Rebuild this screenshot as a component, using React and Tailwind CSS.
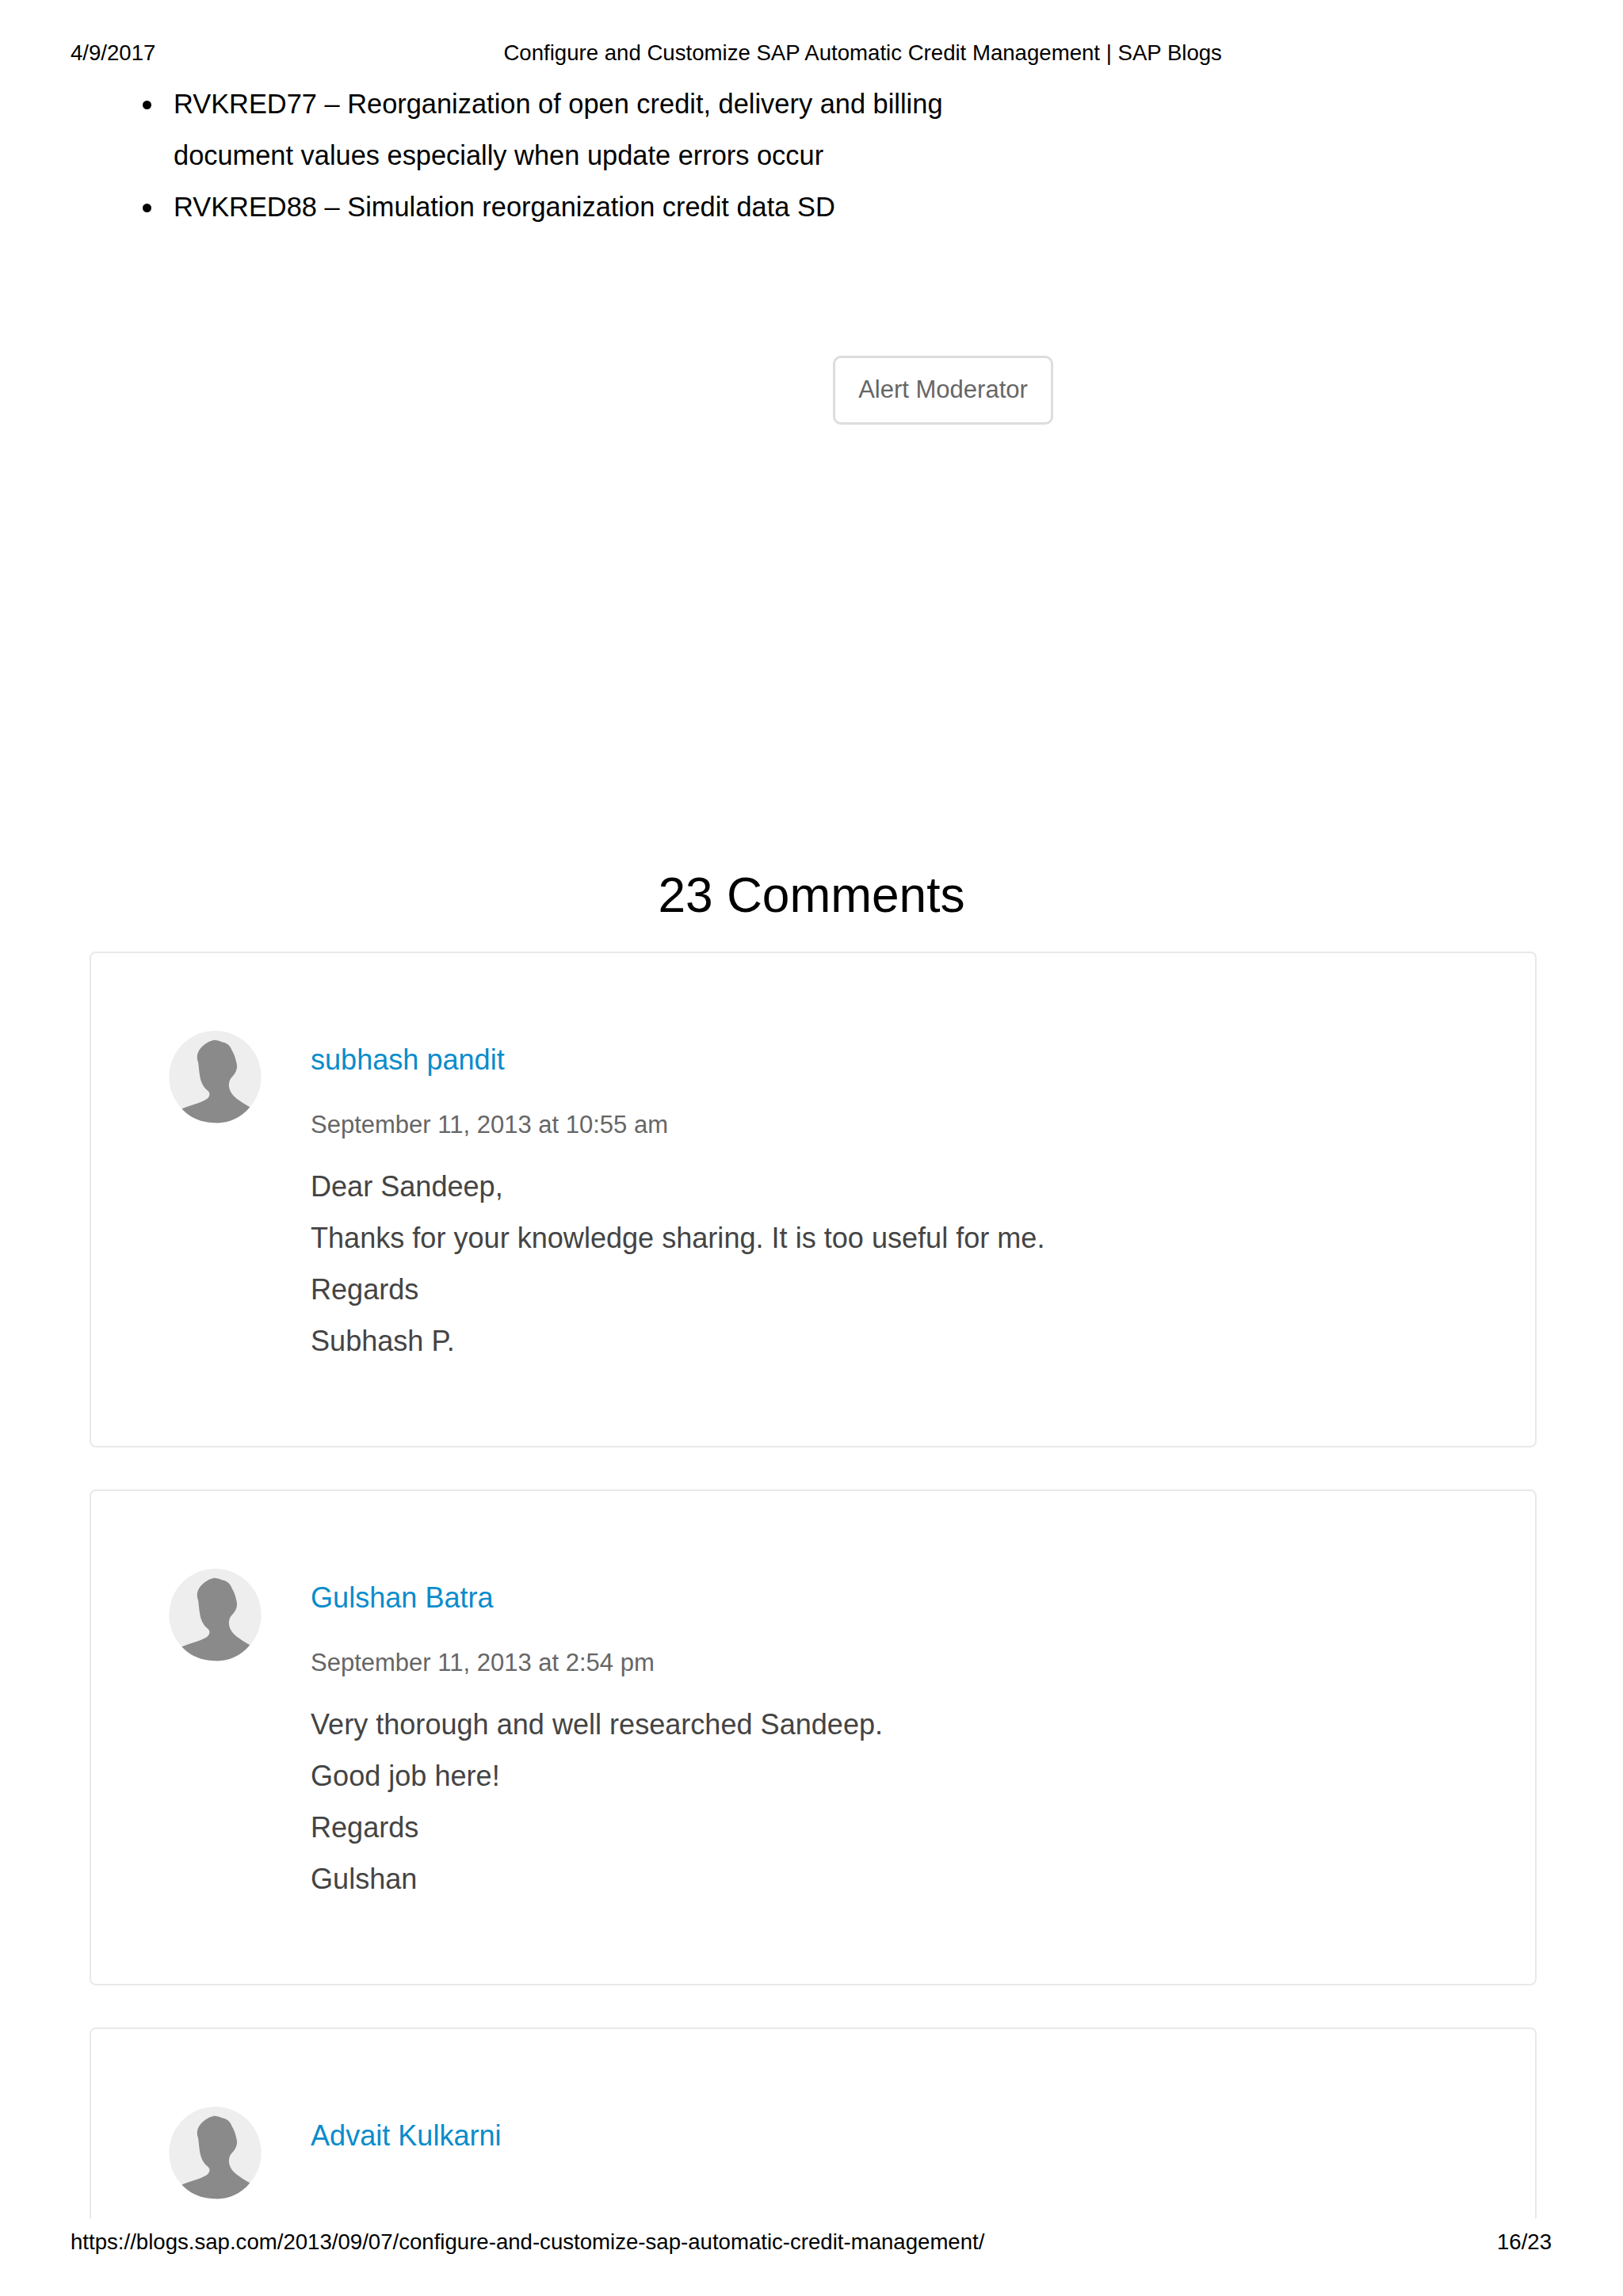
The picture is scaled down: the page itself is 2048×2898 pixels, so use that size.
import React from "react";

const comments = [
  {
    name: "subhash pandit",
    date: "September 11, 2013 at 10:55 am",
    lines: ["Dear Sandeep,", "Thanks for your knowledge sharing. It is too useful for me.", "Regards", "Subhash P."],
  },
  {
    name: "Gulshan Batra",
    date: "September 11, 2013 at 2:54 pm",
    lines: ["Very thorough and well researched Sandeep.", "Good job here!", "Regards", "Gulshan"],
  },
  { name: "Advait Kulkarni", date: "", lines: [] },
];

function Avatar() {
  return (
    <svg viewBox="40 30 348 350" className="w-[117px] h-[117px] shrink-0">
      <circle cx="214" cy="204" r="174" fill="#eeeeee" />
      <path
        d="M210 65 C225 64 235 72 250 75 C265 82 272 90 276 102 C285 118 290 130 293 145 C298 160 298 175 289 190 C283 200 272 208 269 218 C263 235 266 250 277 268 C290 285 320 305 345 318 C310 362 260 380 214 378 C165 378 120 360 88 325 C115 312 150 305 176 292 C192 283 198 270 188 258 C170 245 160 225 156 200 C153 180 152 165 150 150 C142 130 146 112 158 97 C172 80 192 68 210 65 Z"
        fill="#8a8a8a"
      />
    </svg>
  );
}

function CommentCard({ c }) {
  return (
    <div className="bg-white border-2 border-[#e9e9e9] rounded-lg min-h-[626px] pl-[98px] pt-[98px] flex gap-[62px]">
      <Avatar />
      <div>
        <a className="block text-[36.1px] leading-[44px] mt-[15px] text-[#0a8ccb]">{c.name}</a>
        {c.date && <p className="text-[31px] leading-[40px] mt-[40px] text-[#666666]">{c.date}</p>}
        {c.lines.length > 0 && (
          <div className="mt-[25px] text-[36.1px] leading-[65px] text-[#444444]">
            {c.lines.map((l) => (
              <p key={l}>{l}</p>
            ))}
          </div>
        )}
      </div>
    </div>
  );
}

function Bullet() {
  return <span className="shrink-0 w-[11px] h-[11px] mt-[28px] mr-[28px] rounded-full bg-black" />;
}

export default function App() {
  return (
    <div className="w-[2048px] h-[2898px] bg-white overflow-hidden flex flex-col font-['Liberation_Sans',Arial,sans-serif]">
      <header className="flex shrink-0 pl-[89px] pt-[48px] text-[27.6px] leading-[38px] text-black">
        <span>4/9/2017</span>
        <span className="ml-[439px]">Configure and Customize SAP Automatic Credit Management | SAP Blogs</span>
      </header>

      <main className="flex-1 min-h-0 overflow-hidden">
        <ul className="pl-[180px] mt-[13px] text-[34.4px] leading-[65px] text-black">
          <li className="flex">
            <Bullet />
            <span>
              RVKRED77 – Reorganization of open credit, delivery and billing
              <br />
              document values especially when update errors occur
            </span>
          </li>
          <li className="flex">
            <Bullet />
            <span>RVKRED88 – Simulation reorganization credit data SD</span>
          </li>
        </ul>

        <div className="pl-[1051px] mt-[155px]">
          <button className="w-[278px] h-[87px] border-[3px] border-[#dddddd] rounded-[10px] bg-white text-[31px] text-[#666666]">
            Alert Moderator
          </button>
        </div>

        <h2 className="mt-[556px] text-center text-[62.2px] leading-[76px] text-black">23 Comments</h2>

        <div className="mt-[33px] ml-[113px] w-[1826px] flex flex-col gap-[53px]">
          {comments.map((c) => (
            <CommentCard key={c.name} c={c} />
          ))}
        </div>
      </main>

      <footer className="flex shrink-0 justify-between h-[98px] px-[89px] pt-[11px] text-[27.6px] leading-[38px] text-black">
        <span>https://blogs.sap.com/2013/09/07/configure-and-customize-sap-automatic-credit-management/</span>
        <span className="mr-[1px]">16/23</span>
      </footer>
    </div>
  );
}
